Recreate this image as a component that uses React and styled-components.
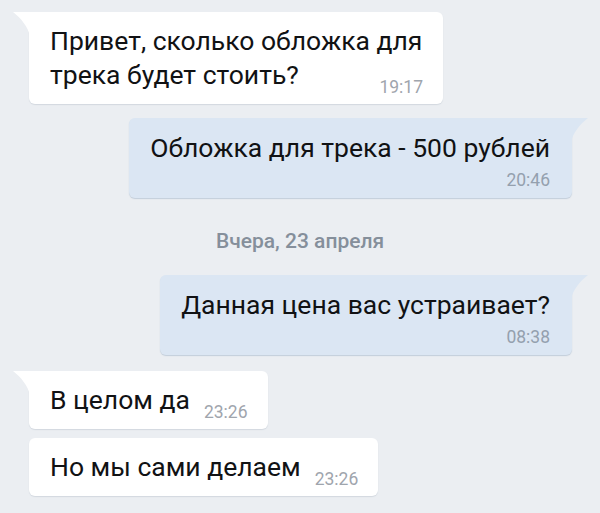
import React from 'react';
import styled, { createGlobalStyle, css } from 'styled-components';

const GlobalStyle = createGlobalStyle`
  html, body {
    margin: 0;
    padding: 0;
    background: #ebeef2;
  }
  body {
    font-family: Roboto, "Noto Sans", "DejaVu Sans", sans-serif;
    -webkit-font-smoothing: antialiased;
  }
`;

const Chat = styled.div`
  width: 600px;
  height: 513px;
  overflow: hidden;
  box-sizing: border-box;
  padding-top: 12px;
  display: flex;
  flex-direction: column;
  background: #ebeef2;
`;

const Row = styled.div`
  display: flex;
  justify-content: ${(p) => (p.$out ? 'flex-end' : 'flex-start')};
  padding: ${(p) => (p.$out ? '0 28px 0 0' : '0 0 0 29px')};
  margin-top: ${(p) => p.$gap || 0}px;
`;

const Bubble = styled.div`
  position: relative;
  box-sizing: border-box;
  max-width: ${(p) => (p.$out ? '460px' : '414px')};
  padding: ${(p) => (p.$out ? '13px 22px 8px 21px' : '12px 20px 7px 21px')};
  background: ${(p) => (p.$out ? '#dbe6f3' : '#ffffff')};
  border-radius: 6px;
  box-shadow: ${(p) =>
    p.$out ? '0 1px 1px rgba(120, 145, 175, 0.35)' : '0 1px 1px rgba(150, 160, 175, 0.28)'};
  ${(p) =>
    p.$tail &&
    (p.$out
      ? css`
          border-top-right-radius: 0;
        `
      : css`
          border-top-left-radius: 0;
        `)}
`;

const TailSvg = styled.svg`
  position: absolute;
  top: 0;
  width: 17px;
  height: 24px;
  ${(p) =>
    p.$out
      ? css`
          right: -16px;
        `
      : css`
          left: -16px;
        `}
`;

const Text = styled.div`
  font-size: 26.5px;
  line-height: 34px;
  color: #111214;
  white-space: normal;
`;

const Time = styled.span`
  font-size: 17.5px;
  line-height: 20px;
  color: ${(p) => (p.$out ? '#94a0ae' : '#9fa5ad')};
  ${(p) =>
    p.$out
      ? css`
          display: block;
          text-align: right;
          margin-top: 5px;
        `
      : css`
          float: right;
          margin: 19px 0 0 14px;
        `}
`;

const DateLabel = styled.div`
  margin-top: 31px;
  text-align: center;
  font-size: 21px;
  line-height: 25px;
  font-weight: 500;
  color: #858f9b;
`;

function Tail({ out }) {
  const fill = out ? '#dbe6f3' : '#ffffff';
  const d = out
    ? 'M17 0 H0 V24 C2 15 9 6 17 0 Z'
    : 'M0 0 H17 V24 C15 15 8 6 0 0 Z';
  return (
    <TailSvg $out={out} viewBox="0 0 17 24" aria-hidden="true">
      <path d={d} fill={fill} />
    </TailSvg>
  );
}

function Message({ out, tail, text, time, gap }) {
  return (
    <Row $out={out} $gap={gap}>
      <Bubble $out={out} $tail={tail}>
        {tail && <Tail out={out} />}
        {out ? (
          <>
            <Text>{text}</Text>
            <Time $out>{time}</Time>
          </>
        ) : (
          <Text>
            {text}
            <Time>{time}</Time>
          </Text>
        )}
      </Bubble>
    </Row>
  );
}

export default function App() {
  return (
    <>
      <GlobalStyle />
      <Chat>
        <Message tail text="Привет, сколько обложка для трека будет стоить?" time="19:17" />
        <Message out tail gap={14} text="Обложка для трека - 500 рублей" time="20:46" />
        <DateLabel>Вчера, 23 апреля</DateLabel>
        <Message out tail gap={21} text="Данная цена вас устраивает?" time="08:38" />
        <Message tail gap={16} text="В целом да" time="23:26" />
        <Message gap={9} text="Но мы сами делаем" time="23:26" />
      </Chat>
    </>
  );
}
